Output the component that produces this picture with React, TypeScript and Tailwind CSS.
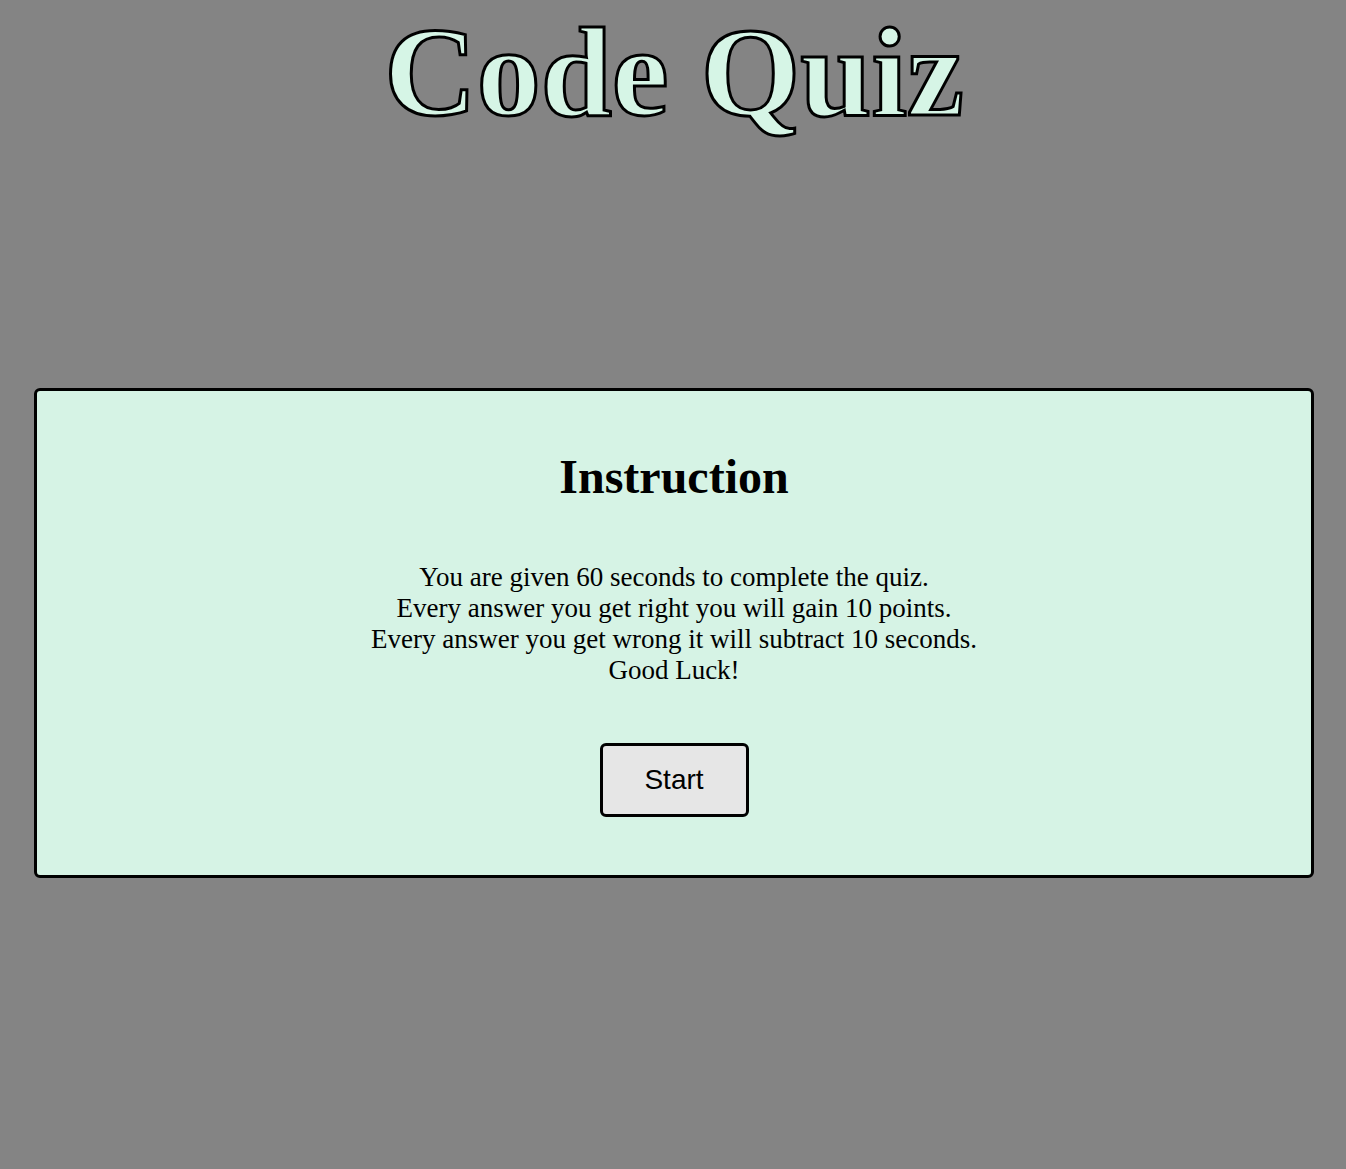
export default function App() {
  return (
    <div className="min-h-[1169px] bg-[#848484] pl-[34px] pr-[32px] pt-[2px] pb-10 font-['Liberation_Serif',serif]">
      <h1 className="m-0 text-center text-[128px] font-bold leading-[141px] text-[#d6f5e6] [-webkit-text-stroke:3px_black]">
        Code Quiz
      </h1>

      <section className="mt-[245px] flex h-[490px] flex-col items-center rounded-md border-[3px] border-black bg-[#d6f3e5] pt-[58px]">
        <h2 className="m-0 text-[48px] font-bold leading-[55px] text-black">Instruction</h2>
        <p className="mt-[58px] text-center text-[27px] leading-[31px] text-black">
          You are given 60 seconds to complete the quiz.
          <br />
          Every answer you get right you will gain 10 points.
          <br />
          Every answer you get wrong it will subtract 10 seconds.
          <br />
          Good Luck!
        </p>
        <button className="mt-[57px] h-[74px] w-[149px] rounded-md border-[3px] border-black bg-[#e6e6e6] font-['Liberation_Sans',Arial,sans-serif] text-[28px] text-black">
          Start
        </button>
      </section>
    </div>
  );
}
